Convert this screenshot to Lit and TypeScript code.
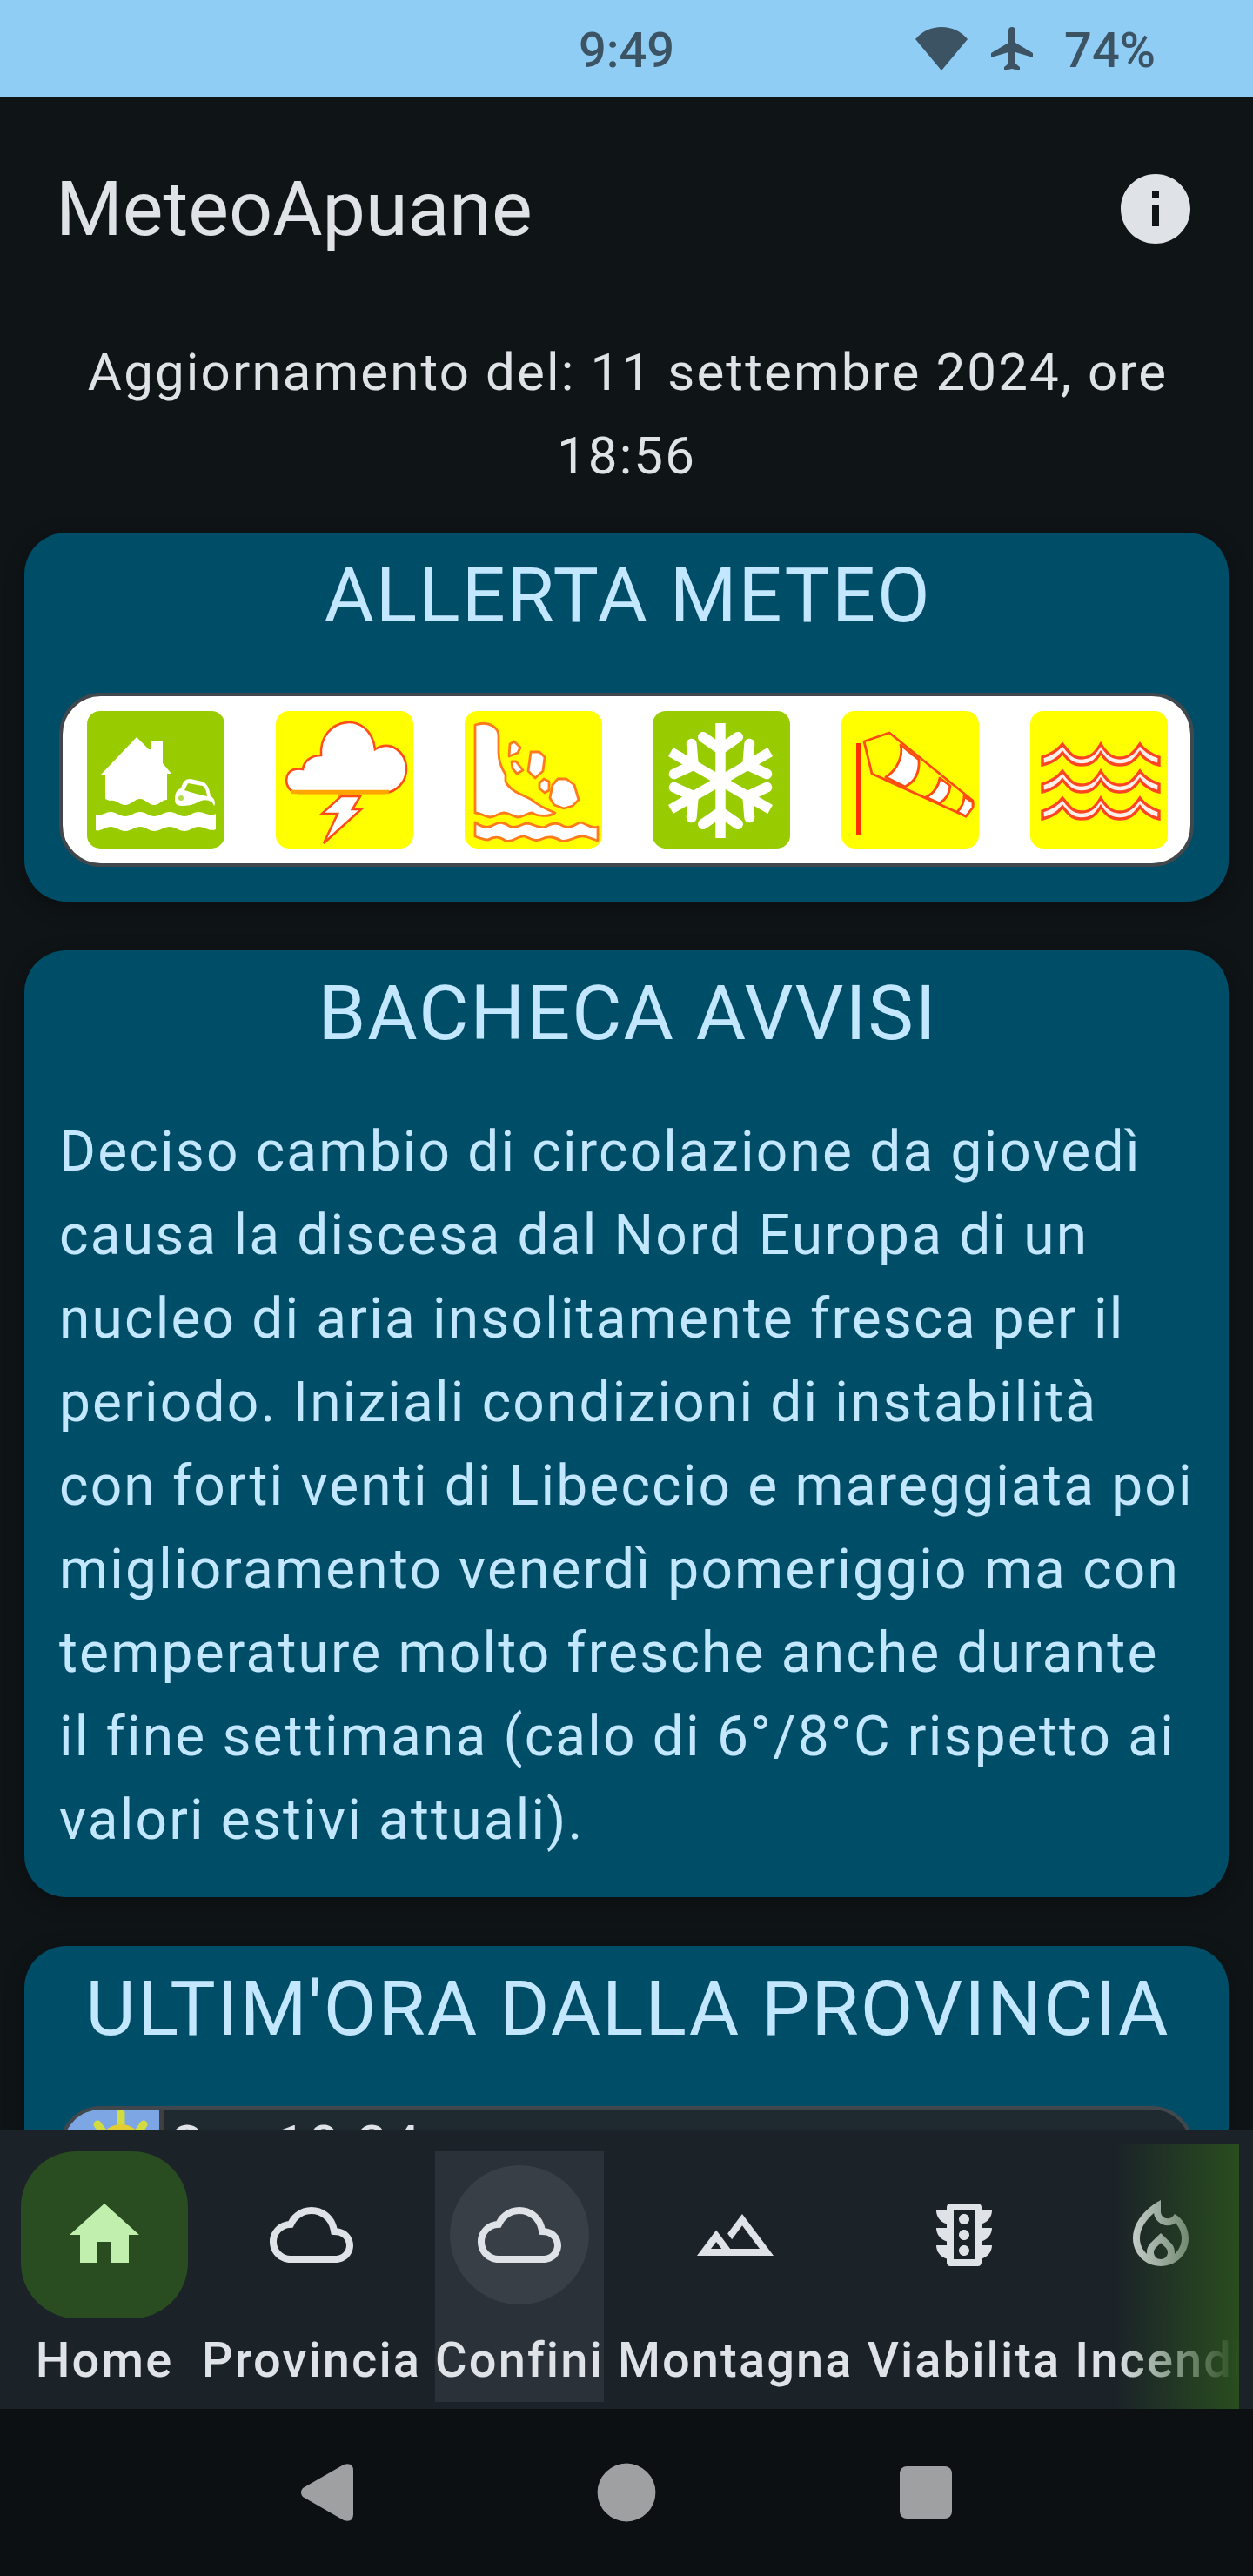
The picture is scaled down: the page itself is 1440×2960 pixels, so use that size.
import { LitElement, html, svg, css } from "lit";
import { customElement, property } from "lit/decorators.js";
import { classMap } from "lit/directives/class-map.js";

const ICONS: Record<string, string> = {
  home: "M10 20v-6h4v6h5v-8h3L12 3 2 12h3v8z",
  cloud:
    "M19.35 10.04C18.67 6.59 15.64 4 12 4 9.11 4 6.6 5.64 5.35 8.04 2.34 8.36 0 10.91 0 14c0 3.31 2.69 6 6 6h13c2.76 0 5-2.24 5-5 0-2.64-2.05-4.78-4.65-4.96zM19 18H6c-2.21 0-4-1.79-4-4 0-2.05 1.53-3.76 3.56-3.97l1.07-.11.5-.95C8.08 7.14 9.94 6 12 6c2.62 0 4.88 1.86 5.39 4.43l.3 1.5 1.53.11c1.56.1 2.78 1.41 2.78 2.96 0 1.65-1.35 3-3 3z",
  landscape:
    "M14 6l-4.22 5.63 1.25 1.67L14 9.33 19 16h-8.46l-4.01-5.37L1 18h22L14 6zM5 16l1.52-2.03L8.04 16H5z",
  traffic:
    "M20 10h-3V8.86c1.72-.45 3-2 3-3.86h-3V4c0-.55-.45-1-1-1H8c-.55 0-1 .45-1 1v1H4c0 1.86 1.28 3.41 3 3.86V10H4c0 1.86 1.28 3.41 3 3.86V15H4c0 1.86 1.28 3.41 3 3.86V20c0 .55.45 1 1 1h8c.55 0 1-.45 1-1v-1.14c1.72-.45 3-2 3-3.86h-3v-1.14c1.72-.45 3-2 3-3.86zm-5 9H9V5h6v14zm-3-1c.83 0 1.5-.67 1.5-1.5S12.83 15 12 15s-1.5.67-1.5 1.5.67 1.5 1.5 1.5zm0-4.5c.83 0 1.5-.67 1.5-1.5s-.67-1.5-1.5-1.5-1.5.67-1.5 1.5.67 1.5 1.5 1.5zM12 9c.83 0 1.5-.67 1.5-1.5S12.83 6 12 6s-1.5.67-1.5 1.5S11.17 9 12 9z",
  fire: "M16 6l-.44.55C14.38 8.02 12 7.19 12 5.3V2S4 6 4 13c0 4.42 3.58 8 8 8s8-3.58 8-8c0-2.98-1.61-5.62-4-7zm-4 13c-1.1 0-2-.87-2-1.94 0-.51.2-.99.58-1.36L12 14.3l1.43 1.4c.37.37.57.85.57 1.36 0 1.07-.9 1.94-2 1.94zm3.96-1.5c.04-.36.22-1.89-1.13-3.22L12 11.5l-2.83 2.78C7.81 15.62 8 17.16 8.04 17.5 6.79 16.4 6 14.79 6 13c0-3.16 2.13-5.65 4.03-7.25.23 1.99 1.93 3.55 3.99 3.55.78 0 1.54-.23 2.18-.66C17.34 9.78 18 11.35 18 13c0 1.79-.79 3.4-2.04 4.5z",
  info: "M12 2C6.48 2 2 6.48 2 12s4.48 10 10 10 10-4.48 10-10S17.52 2 12 2zm1 15h-2v-6h2v6zm0-8h-2V7h2v2z",
};

const icon = (name: string) =>
  html`<svg class="icon" viewBox="0 0 24 24" width="96" height="96"><path d=${ICONS[name]} fill="currentColor" fill-rule="evenodd" /></svg>`;

const seaWave =
  "M15 54C24 51 33 46 38 39C46 49 50 55 60 55C70 55 76 49 82 39C88 49 94 55 104 55C114 55 120 49 127 39C132 46 140 51 149 54V63C140 61 132 56 127 49C120 59 114 63 104 63C94 63 88 59 82 49C76 59 70 63 60 63C50 63 46 59 38 49C33 56 24 61 15 63Z";

const ALERTS: Record<string, ReturnType<typeof svg>> = {
  flood: svg`
    <g fill="#fff">
      <path d="M58 31L72 45H74V35H88V61L98 73H93V103C88 102 84 109 78 109C72 109 68 102 62 102C56 102 51 109 45 109C39 109 34 102 27 104L22 102V74H17Z"/>
      <path d="M11 120C16 123 22 117 28 117C34 117 39 122 45 122C51 122 56 117 62 117C68 117 73 122 78 122C84 122 90 117 96 117C102 117 107 122 113 122C119 122 123 117 129 117C136 117 142 123 149 119V137C142 140 136 134 129 134C123 134 119 139 113 139C107 139 102 134 96 134C90 134 84 139 78 139C73 139 68 134 62 134C56 134 51 139 45 139C39 139 34 134 28 134C22 134 16 140 11 138Z"/>
      <path fill-rule="evenodd" d="M102 103C102 94 105 91 109 90C111 82 114 79 120 79L133 82C140 84 142 92 143 99C148 101 149 108 147 110L145 106C138 102 134 103 128 106C122 109 116 110 110 110C104 110 102 107 102 103ZM113 92L117 84L134 87Q138 90 139 99L126 96Z"/>
    </g>
    <circle cx="109" cy="101" r="3" fill="#b5da4c"/>`,
  storm: svg`
    <path d="M22 94C10 90 10 70 23 68Q27 67 32 68C33 59 41 52 53 52C50 8 109 -2 115 45C133 34 151 48 151 68C151 83 139 94 127 95H26Z" fill="#fff" stroke="#ff4d1a" stroke-width="2.6"/>
    <path d="M19 94H131" stroke="#ffa500" stroke-width="4.5"/>
    <path d="M73 94H98V100H73Z" fill="#ffa500"/>
    <path d="M76 99H98L89 114H99L56 153L72 119H54Z" fill="#fff" stroke="#ff4d1a" stroke-width="2.6"/>`,
  slide: svg`
    <g fill="#fff" stroke="#ff7a1a" stroke-width="2.8" stroke-linejoin="round">
      <path d="M13 17Q25 13 33 18Q40 22 40 30V48C40 58 44 68 48 74V82C54 94 68 97 78 103C86 110 95 114 105 118C98 123 84 122 79 118C73 118 69 123 62 123C56 122 52 118 46 118C40 118 36 123 30 123C24 122 18 118 13 118Z"/>
      <path d="M53 39L58 36L65 43L62 49L52 53Z"/>
      <path d="M55 59L60 59L68 69L61 73L56 67Z"/>
      <path d="M77 48H87L93 54L91 70L82 78L74 70Z"/>
      <path d="M87 84L92 79L98 82V92L93 95L87 90Z"/>
      <path d="M108 79H118L127 86L132 103L125 110L115 113L104 109L99 101L102 86Z"/>
      <path d="M13 129C20 134 28 136 34 132C42 128 46 129 52 133C60 137 66 131 72 130C80 130 86 137 94 134C102 129 108 129 114 133C122 137 128 131 134 129C142 131 147 137 154 134V150C146 148 142 144 134 145C126 146 120 152 112 150C104 146 98 144 90 148C82 152 76 147 70 145C62 144 56 153 48 150C42 146 36 144 28 149C22 149 18 147 13 145Z"/>
    </g>`,
  snow: svg`
    <g fill="none" stroke="#fff">
      ${[0, 60, 120, 180, 240, 300].map(
        (a) => svg`<g transform="rotate(${a} 79 81)">
          <path d="M79 81V15" stroke-width="11.5"/>
          <path d="M59 31L79 45L99 31" stroke-width="12" stroke-linecap="round"/>
        </g>`
      )}
    </g>`,
  wind: svg`
    <path d="M21 38V143" stroke="#ff3000" stroke-width="6"/>
    <g stroke="#ff4a12" stroke-width="2.8" stroke-linejoin="round">
      <path d="M27 36L56 26L152 104V110L144 122L36 73Z" fill="#ff0"/>
      <path d="M69 40C72 52 66 68 52 77L74 88C86 82 91 72 90 57Z" fill="#fff"/>
      <path d="M114 78C113 87 107 96 98 100L114 107C121 102 125 97 126 87Z" fill="#fff"/>
      <path d="M142 99C142 107 139 112 134 117L144 122L152 112V106Z" fill="#fff"/>
    </g>`,
  sea: svg`
    <g fill="#fff0ec" stroke="#ff4422" stroke-width="3.4">
      <path d=${seaWave}/>
      <path transform="translate(0 31)" d=${seaWave}/>
      <path transform="translate(0 62)" d=${seaWave}/>
    </g>`,
};

@customElement("alert-tile")
class AlertTile extends LitElement {
  @property() kind = "flood";
  @property() level = "green";
  static styles = css`
    :host { display: block; width: 160px; height: 160px; }
    svg { display: block; }
  `;
  render() {
    const fill = this.level === "green" ? "#99cc00" : "#ffff00";
    return html`<svg viewBox="0 0 160 160" width="160" height="160">
      <rect x="1" y="1" width="158" height="158" rx="15" fill=${fill} />
      ${ALERTS[this.kind]}
    </svg>`;
  }
}

@customElement("info-card")
class InfoCard extends LitElement {
  @property() heading = "";
  static styles = css`
    :host {
      display: block;
      box-sizing: border-box;
      flex: none;
      margin: 0 28px;
      padding: 16px 40px 40px;
      border-radius: 48px;
      background: #004d68;
      color: #c3e7ff;
      box-shadow: 0 6px 24px rgba(0, 0, 0, 0.3);
    }
    .heading {
      margin: 0 -20px 56px;
      font-size: 88px;
      line-height: 112px;
      font-weight: 400;
      letter-spacing: 2px;
      text-indent: 3px;
      text-align: center;
      white-space: nowrap;
    }
  `;
  render() {
    return html`<h2 class="heading">${this.heading}</h2><slot></slot>`;
  }
}

@customElement("app-root")
class AppRoot extends LitElement {
  static styles = css`
    :host {
      display: flex;
      flex-direction: column;
      width: 1440px;
      height: 2960px;
      overflow: hidden;
      background: #0f1417;
      color: #dfe3e7;
      font-family: Roboto, sans-serif;
    }
    svg { display: block; flex: none; }
    .status {
      flex: none;
      display: grid;
      grid-template-columns: 1fr auto 1fr;
      align-items: center;
      height: 112px;
      background: #90cdf4;
      color: #3c5364;
      font-size: 56px;
      font-weight: 500;
    }
    .clock { grid-column: 2; padding-top: 4px; }
    .signals { display: flex; align-items: center; justify-content: flex-end; padding-right: 112px; }
    .wifi { margin-right: 27px; }
    .plane { margin-right: 36px; }
    .battery { padding-top: 4px; }
    .bar {
      flex: none;
      display: flex;
      align-items: center;
      justify-content: space-between;
      height: 256px;
      padding: 0 64px;
    }
    .title { margin: 0; font-size: 88px; font-weight: 400; line-height: 112px; }
    .content {
      flex: 1;
      min-height: 0;
      display: flex;
      flex-direction: column;
      gap: 56px;
      overflow: hidden;
    }
    .updated {
      margin: 12px 64px -16px;
      font-size: 60px;
      line-height: 96px;
      letter-spacing: 2.15px;
      text-indent: 3px;
      text-align: center;
    }
    .alerts {
      display: flex;
      justify-content: space-between;
      align-items: center;
      box-sizing: border-box;
      height: 200px;
      padding: 0 25px 0 27px;
      border: 4px solid #41484d;
      border-radius: 48px;
      background: #fff;
    }
    .notice { margin: 0; font-size: 64px; line-height: 96px; letter-spacing: 2.18px; white-space: nowrap; }
    .live {
      display: flex;
      box-sizing: border-box;
      height: 320px;
      border: 4px solid #41484d;
      border-radius: 48px;
      background: #1e2930;
      color: #dfe3e7;
      overflow: hidden;
      font-size: 64px;
      line-height: 80px;
      letter-spacing: 2px;
    }
    .live-time { padding: 3px 0 0 5px; }
    .nav {
      flex: none;
      position: relative;
      display: flex;
      gap: 16px;
      box-sizing: border-box;
      height: 320px;
      padding: 24px 16px 8px 24px;
      background: #1b2228;
      overflow: hidden;
    }
    .item {
      flex: none;
      display: flex;
      flex-direction: column;
      align-items: center;
      min-width: 192px;
      height: 288px;
      font-size: 56px;
      font-weight: 500;
      line-height: 80px;
      letter-spacing: 2.11px;
    }
    .pressed { background: #2a3138; }
    .spot { display: grid; place-items: center; width: 192px; height: 192px; margin-bottom: 8px; }
    .selected .spot { border-radius: 64px; background: #294d20; color: #c0efae; }
    .disc { display: grid; place-items: center; width: 160px; height: 160px; border-radius: 50%; }
    .pressed .disc { background: #383f46; }
    .fade {
      position: absolute;
      top: 16px;
      bottom: 0;
      right: 16px;
      width: 144px;
      background: linear-gradient(to right, rgba(41, 77, 32, 0), #294d20);
    }
    .edge { position: absolute; top: 0; bottom: 0; right: 0; width: 16px; background: #1b2228; }
    .system {
      flex: none;
      display: flex;
      justify-content: center;
      align-items: center;
      gap: 248px;
      height: 192px;
      background: #0c1013;
      color: #9fa0a1;
    }
  `;

  private notice = [
    "Deciso cambio di circolazione da giovedì",
    "causa la discesa dal Nord Europa di un",
    "nucleo di aria insolitamente fresca per il",
    "periodo. Iniziali condizioni di instabilità",
    "con forti venti di Libeccio e mareggiata poi",
    "miglioramento venerdì pomeriggio ma con",
    "temperature molto fresche anche durante",
    "il fine settimana (calo di 6°/8°C rispetto ai",
    "valori estivi attuali).",
  ];

  private alerts = [
    ["flood", "green"],
    ["storm", "yellow"],
    ["slide", "yellow"],
    ["snow", "green"],
    ["wind", "yellow"],
    ["sea", "yellow"],
  ];

  private items = [
    { label: "Home", icon: "home", selected: true },
    { label: "Provincia", icon: "cloud" },
    { label: "Confini", icon: "cloud", pressed: true },
    { label: "Montagna", icon: "landscape" },
    { label: "Viabilita", icon: "traffic" },
    { label: "Incendi", icon: "fire" },
  ];

  render() {
    return html`
      <div class="status">
        <span class="clock">9:49</span>
        <div class="signals">
          <svg class="wifi" viewBox="0 0 60 50" width="60" height="50"><path d="M0 14Q12 0 30 0T60 14L30 50Z" fill="currentColor" /></svg>
          <svg class="plane" viewBox="0 0 48 50" width="48" height="50"><path d="M24 0Q28 0 28 4V18L48 30V35L28 29V42L33 46V50L24 48L15 50V46L20 42V29L0 35V30L20 18V4Q20 0 24 0Z" fill="currentColor" /></svg>
          <span class="battery">74%</span>
        </div>
      </div>
      <header class="bar">
        <h1 class="title">MeteoApuane</h1>
        ${icon("info")}
      </header>
      <main class="content">
        <p class="updated">Aggiornamento del: 11 settembre 2024, ore<br />18:56</p>
        <info-card heading="ALLERTA METEO">
          <div class="alerts">
            ${this.alerts.map(([kind, level]) => html`<alert-tile kind=${kind} level=${level}></alert-tile>`)}
          </div>
        </info-card>
        <info-card heading="BACHECA AVVISI">
          <p class="notice">${this.notice.map((line, i) => html`${i ? html`<br />` : ""}${line}`)}</p>
        </info-card>
        <info-card heading="ULTIM'ORA DALLA PROVINCIA">
          <div class="live">
            <svg viewBox="0 0 116 116" width="116" height="116">
              <rect width="116" height="116" fill="#3f3f40" />
              <rect width="111" height="111" y="1" fill="#7da7e4" />
              <path d="M67 4V24M40 17L54 36M93 17L80 36" stroke="#d2dc40" stroke-width="9" stroke-linecap="round" />
              <circle cx="67" cy="43" r="26" fill="#e2cd33" />
            </svg>
            <span class="live-time">Ore 18:24</span>
          </div>
        </info-card>
      </main>
      <nav class="nav">
        ${this.items.map(
          (item) => html`<div class=${classMap({ item: true, selected: !!item.selected, pressed: !!item.pressed })}>
            <div class="spot"><div class="disc">${icon(item.icon)}</div></div>
            <span>${item.label}</span>
          </div>`
        )}
        <div class="fade"></div>
        <div class="edge"></div>
      </nav>
      <div class="system">
        <svg viewBox="0 0 62 68" width="96" height="68"><path d="M3 29L50 2Q61 -1 61 9V59Q61 69 50 66L3 39Q-1 34 3 29Z" fill="currentColor" /></svg>
        <svg viewBox="0 0 68 68" width="96" height="68"><circle cx="34" cy="34" r="33.4" fill="currentColor" /></svg>
        <svg viewBox="0 0 60 60" width="96" height="60"><rect width="60" height="60" rx="8" fill="currentColor" /></svg>
      </div>
    `;
  }
}
